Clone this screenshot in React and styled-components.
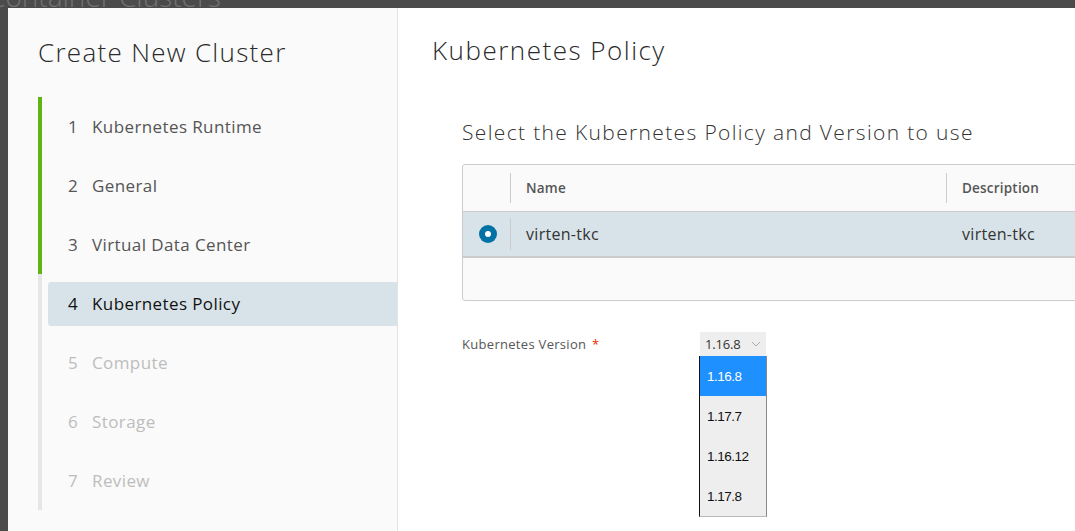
import React from "react";
import styled, { createGlobalStyle } from "styled-components";

const GlobalStyle = createGlobalStyle`
  body {
    margin: 0;
    background: #4b4b4b;
    font-family: "Open Sans", "Noto Sans", sans-serif;
    overflow: hidden;
  }
`;

const steps = [
  { n: 1, label: "Kubernetes Runtime", state: "done" },
  { n: 2, label: "General", state: "done" },
  { n: 3, label: "Virtual Data Center", state: "done" },
  { n: 4, label: "Kubernetes Policy", state: "active" },
  { n: 5, label: "Compute", state: "todo" },
  { n: 6, label: "Storage", state: "todo" },
  { n: 7, label: "Review", state: "todo" },
];

const versions = ["1.16.8", "1.17.7", "1.16.12", "1.17.8"];

export default function App() {
  return (
    <>
      <GlobalStyle />
      <Backdrop>
        <PageTitle>Container Clusters</PageTitle>
        <Modal>
          <Nav>
            <NavTitle>Create New Cluster</NavTitle>
            <StepList>
              {steps.map((s) => (
                <Step key={s.n} state={s.state}>
                  <StepInner state={s.state}>
                    <StepNum>{s.n}</StepNum>
                    <span>{s.label}</span>
                  </StepInner>
                </Step>
              ))}
            </StepList>
          </Nav>
          <Content>
            <ContentTitle>Kubernetes Policy</ContentTitle>
            <Section>
              <SubTitle>Select the Kubernetes Policy and Version to use</SubTitle>
              <Grid>
                <HeaderRow>
                  <SelectCell />
                  <NameCell>
                    <Divider />
                    <HeadText>Name</HeadText>
                  </NameCell>
                  <DescCell>
                    <Divider />
                    <HeadText>Description</HeadText>
                  </DescCell>
                </HeaderRow>
                <DataRow>
                  <SelectCell>
                    <Radio />
                  </SelectCell>
                  <NameCell>
                    <Divider tall />
                    <CellText>virten-tkc</CellText>
                  </NameCell>
                  <DescCell>
                    <CellText indent>virten-tkc</CellText>
                  </DescCell>
                </DataRow>
                <GridFooter />
              </Grid>
              <FormRow>
                <Label>
                  Kubernetes Version <Required>*</Required>
                </Label>
                <SelectWrap>
                  <SelectBox>
                    <span>1.16.8</span>
                    <svg width="10" height="6" viewBox="0 0 10 6">
                      <path d="M1 1l4 4 4-4" fill="none" stroke="#aaa" strokeWidth="1" />
                    </svg>
                  </SelectBox>
                  <Options>
                    {versions.map((v, i) => (
                      <Option key={v} selected={i === 0}>
                        {v}
                      </Option>
                    ))}
                  </Options>
                </SelectWrap>
              </FormRow>
            </Section>
          </Content>
        </Modal>
      </Backdrop>
    </>
  );
}

const Backdrop = styled.div`
  position: relative;
  width: 1075px;
  height: 531px;
  overflow: hidden;
  background: #4b4b4b;
`;

const PageTitle = styled.div`
  margin: -23px 0 0 -12px;
  font-size: 28px;
  font-weight: 300;
  color: #727272;
  white-space: nowrap;
`;

const Modal = styled.div`
  position: absolute;
  top: 8px;
  left: 8px;
  width: 1100px;
  height: 540px;
  display: flex;
  background: #fff;
  border-radius: 3px 0 0 0;
`;

const Nav = styled.div`
  width: 359px;
  flex-shrink: 0;
  padding: 0 0 0 30px;
  background: #fafafa;
  border-right: 1px solid #e4e4e4;
`;

const NavTitle = styled.h1`
  margin: 26px 0 0;
  font-size: 26px;
  line-height: 36px;
  font-weight: 300;
  color: #2a2a2a;
  letter-spacing: 1.3px;
`;

const StepList = styled.div`
  margin-top: 27px;
  display: flex;
  flex-direction: column;
`;

const Step = styled.div`
  height: 59px;
  display: flex;
  align-items: center;
  padding-left: 6px;
  border-left: 4px solid ${(p) => (p.state === "done" ? "#60b515" : "#e6e6e6")};
`;

const StepInner = styled.div`
  flex: 1;
  height: 44px;
  display: flex;
  align-items: center;
  padding-left: 20px;
  border-radius: 3px 0 0 3px;
  font-size: 17px;
  letter-spacing: 0.4px;
  background: ${(p) => (p.state === "active" ? "#d8e3e9" : "transparent")};
  color: ${(p) =>
    p.state === "active" ? "#111" : p.state === "done" ? "#555" : "#bdbdbd"};
`;

const StepNum = styled.span`
  width: 24px;
`;

const Content = styled.div`
  flex: 1;
  padding-left: 34px;
`;

const ContentTitle = styled.h2`
  margin: 24px 0 0;
  font-size: 26px;
  line-height: 36px;
  font-weight: 300;
  color: #2a2a2a;
  letter-spacing: 1.5px;
`;

const Section = styled.div`
  padding-left: 30px;
`;

const SubTitle = styled.h3`
  margin: 49px 0 0;
  font-size: 21px;
  line-height: 30px;
  font-weight: 300;
  color: #333;
  letter-spacing: 1.35px;
`;

const Grid = styled.div`
  margin-top: 17px;
  width: 700px;
  border: 1px solid #ccc;
  border-radius: 3px;
  background: #fafafa;
  overflow: hidden;
`;

const HeaderRow = styled.div`
  height: 46px;
  display: flex;
`;

const DataRow = styled.div`
  height: 44px;
  display: flex;
  background: #d8e3e9;
  border-top: 1px solid #ccc;
  border-bottom: 2px solid #ccc;
`;

const GridFooter = styled.div`
  height: 42px;
`;

const SelectCell = styled.div`
  width: 47px;
  display: flex;
  align-items: center;
  justify-content: center;
`;

const NameCell = styled.div`
  width: 436px;
  display: flex;
  align-items: center;
`;

const DescCell = styled.div`
  flex: 1;
  display: flex;
  align-items: center;
`;

const Divider = styled.div`
  width: 1px;
  height: ${(p) => (p.tall ? "32px" : "30px")};
  background: #ccc;
  margin-right: 15px;
`;

const HeadText = styled.span`
  font-size: 13.5px;
  font-weight: 600;
  color: #565656;
  letter-spacing: 0.2px;
`;

const CellText = styled.span`
  font-size: 16px;
  color: #333;
  letter-spacing: 0.3px;
  padding-left: ${(p) => (p.indent ? "16px" : "0")};
`;

const Radio = styled.div`
  width: 18px;
  height: 18px;
  margin-left: 3px;
  border-radius: 50%;
  background: #0072a3;
  display: flex;
  align-items: center;
  justify-content: center;

  &::after {
    content: "";
    width: 6px;
    height: 6px;
    border-radius: 50%;
    background: #fff;
  }
`;

const FormRow = styled.div`
  margin-top: 31px;
  display: flex;
  align-items: flex-start;
`;

const Label = styled.div`
  width: 238px;
  padding-top: 3px;
  font-size: 13px;
  color: #565656;
  letter-spacing: 0.3px;
`;

const Required = styled.span`
  color: #e62700;
  margin-left: 2px;
`;

const SelectWrap = styled.div`
  display: flex;
  flex-direction: column;
  width: 66px;
`;

const SelectBox = styled.div`
  height: 24px;
  display: flex;
  align-items: center;
  justify-content: space-between;
  padding: 0 5px;
  background: #eee;
  font-size: 13px;
  color: #333;
  letter-spacing: -0.2px;
`;

const Options = styled.div`
  margin-left: -1px;
  width: 66px;
  background: #eee;
  border-left: 1px solid #111;
  border-right: 1px solid #888;
  border-bottom: 1px solid #bbb;
`;

const Option = styled.div`
  height: 40px;
  display: flex;
  align-items: center;
  padding-left: 7px;
  font-family: "Liberation Sans", Arial, sans-serif;
  font-size: 13.5px;
  letter-spacing: -0.5px;
  background: ${(p) => (p.selected ? "#1e90ff" : "#eee")};
  color: ${(p) => (p.selected ? "#fff" : "#111")};
`;
